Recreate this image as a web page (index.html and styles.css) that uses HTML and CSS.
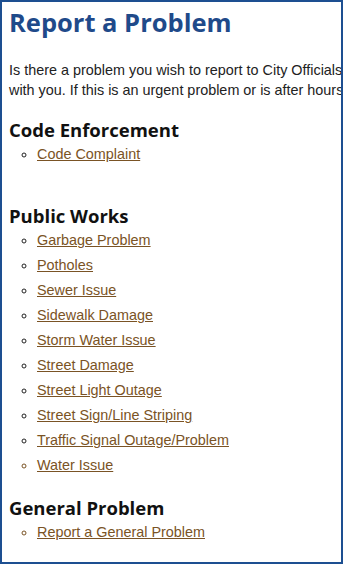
FILE: index.html
```html
<!DOCTYPE html>
<html lang="en">
<head>
    <meta charset="UTF-8">
    <meta name="viewport" content="width=device-width, initial-scale=1.0">
    <title>Report a Problem</title>
    <link rel="stylesheet" href="styles.css">
</head>
<body>
    <div class="page">
        <h1>Report a Problem</h1>
        <p class="intro">Is there a problem you wish to report to City Officials? We want to hear about it and work<br>with you. If this is an urgent problem or is after hours, please call the non-emergency line.</p>

        <div class="section">
            <h2>Code Enforcement</h2>
            <ul>
                <li><a href="#">Code Complaint</a></li>
            </ul>
            <p class="spacer">&nbsp;</p>
        </div>

        <div class="section">
            <h2>Public Works</h2>
            <ul>
                <li><a href="#">Garbage Problem</a></li>
                <li><a href="#">Potholes</a></li>
                <li><a href="#">Sewer Issue</a></li>
                <li><a href="#">Sidewalk Damage</a></li>
                <li><a href="#">Storm Water Issue</a></li>
                <li><a href="#">Street Damage</a></li>
                <li><a href="#">Street Light Outage</a></li>
                <li><a href="#">Street Sign/Line Striping</a></li>
                <li><a href="#">Traffic Signal Outage/Problem</a></li>
                <li class="linked"><a href="#">Water Issue</a></li>
            </ul>
        </div>

        <div class="section">
            <h2>General Problem</h2>
            <ul>
                <li class="linked"><a href="#">Report a General Problem</a></li>
            </ul>
        </div>
    </div>
</body>
</html>
```

FILE: styles.css
```css
* {
    margin: 0;
    padding: 0;
    box-sizing: border-box;
}

body {
    background-color: #ffffff;
    font-family: "Liberation Sans", Arial, sans-serif;
    color: #222222;
}

.page {
    width: 343px;
    height: 564px;
    border: 2px solid #1d4f91;
    padding: 0 0 0 7px;
    overflow: hidden;
}

h1 {
    font-family: "Open Sans", sans-serif;
    font-weight: 700;
    font-size: 25.5px;
    line-height: 32px;
    color: #1f4a8a;
    margin-top: 4px;
}

.intro {
    font-size: 14.4px;
    line-height: 20px;
    white-space: nowrap;
    margin-top: 22px;
}

.section {
    margin-top: 18px;
}

.section + .section {
    margin-top: 21px;
}

h2 {
    font-family: "Open Sans", sans-serif;
    font-weight: 700;
    font-size: 18.5px;
    line-height: 24px;
    color: #111111;
}

ul {
    list-style: circle;
    padding-left: 28px;
    margin-top: 2px;
    font-size: 14.4px;
    line-height: 20px;
}

li + li {
    margin-top: 5px;
}

li.linked {
    color: #7a5325;
}

a {
    color: #7a5325;
    text-decoration: underline;
}

.spacer {
    line-height: 19px;
    font-size: 14px;
}
```
